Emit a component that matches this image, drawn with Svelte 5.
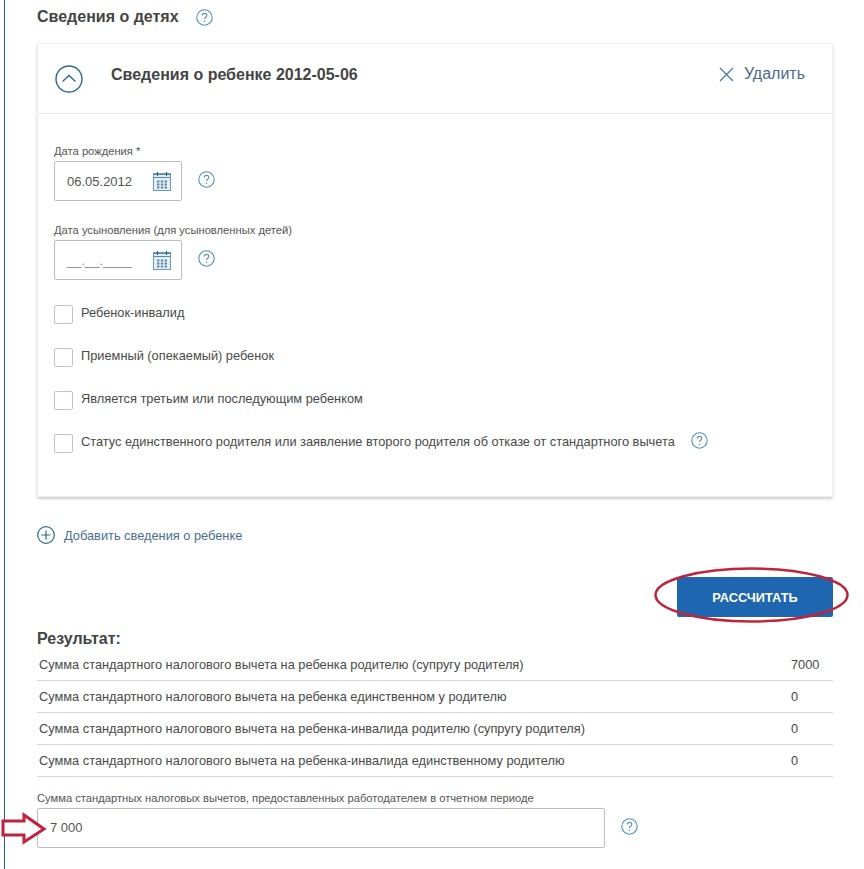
<script>
	const checks = [
		{ label: 'Ребенок-инвалид' },
		{ label: 'Приемный (опекаемый) ребенок' },
		{ label: 'Является третьим или последующим ребенком' },
		{ label: 'Статус единственного родителя или заявление второго родителя об отказе от стандартного вычета', help: true }
	];

	const results = [
		{ label: 'Сумма стандартного налогового вычета на ребенка родителю (супругу родителя)', value: '7000' },
		{ label: 'Сумма стандартного налогового вычета на ребенка единственном у родителю', value: '0' },
		{ label: 'Сумма стандартного налогового вычета на ребенка-инвалида родителю (супругу родителя)', value: '0' },
		{ label: 'Сумма стандартного налогового вычета на ребенка-инвалида единственному родителю', value: '0' }
	];
</script>

{#snippet help()}
	<svg class="help" width="17" height="17" viewBox="0 0 17 17">
		<circle cx="8.5" cy="8.5" r="7.7" fill="none" stroke="#4f93b5" stroke-width="1.1" />
		<path d="M6.2 6.6c0-1.4 1-2.2 2.3-2.2s2.3.8 2.3 2c0 1.8-2.3 1.8-2.3 3.6" fill="none" stroke="#5f8fa8" stroke-width="1.1" />
		<circle cx="8.5" cy="12.3" r=".8" fill="#5f8fa8" />
	</svg>
{/snippet}

{#snippet calendar()}
	<svg class="calendar" width="18" height="19" viewBox="0 0 18 19">
		<rect x=".5" y="1.5" width="17" height="17" fill="#e3eff6" stroke="#6f9ab5" />
		<path d="M1 2.500h16M1 5.500h16" stroke="#5b8aa8" />
		<path d="M4.500 0v4M13.500 0v4" stroke="#2f5f80" />
		<path d="M4 9.500h2.400M7.800 9.500h2.400M11.600 9.500h2.400M4 12.500h2.400M7.800 12.500h2.400M11.600 12.500h2.400M4 15.500h2.400M7.800 15.500h2.400M11.600 15.500h2.400" stroke="#5f88a5" stroke-width="2" />
	</svg>
{/snippet}

<div class="page">
	<div class="section-title">
		<h2>Сведения о детях</h2>
		{@render help()}
	</div>

	<div class="card">
		<div class="card-header">
			<svg class="toggle" width="28" height="28" viewBox="0 0 28 28">
				<circle cx="14" cy="14" r="13" fill="none" stroke="#2b6a94" stroke-width="1.4" />
				<path d="M7.500 16.500 14 10.500l6.500 6" fill="none" stroke="#2b6a94" stroke-width="1.3" />
			</svg>
			<h3>Сведения о ребенке 2012-05-06</h3>
			<button class="remove">
				<svg width="15" height="15" viewBox="0 0 15 15">
					<path d="M1 1l13 13M14 1 1 14" stroke="#3f7aa5" stroke-width="1.2" />
				</svg>
				<span>Удалить</span>
			</button>
		</div>

		<div class="card-body">
			<div class="field">
				<span class="field-label">Дата рождения *</span>
				<div class="field-row">
					<div class="date-input">
						<span>06.05.2012</span>
						{@render calendar()}
					</div>
					{@render help()}
				</div>
			</div>

			<div class="field">
				<span class="field-label">Дата усыновления (для усыновленных детей)</span>
				<div class="field-row">
					<div class="date-input">
						<span class="mask">__.__.____</span>
						{@render calendar()}
					</div>
					{@render help()}
				</div>
			</div>

			<div class="checks">
				{#each checks as item}
					<div class="check">
						<span class="box"></span>
						<span class="check-label">{item.label}</span>
						{#if item.help}
							{@render help()}
						{/if}
					</div>
				{/each}
			</div>
		</div>
	</div>

	<div class="add">
		<svg width="18" height="18" viewBox="0 0 18 18">
			<circle cx="9" cy="9" r="8.300" fill="none" stroke="#2b6a94" stroke-width="1.200" />
			<path d="M9 4.500v9M4.500 9h9" stroke="#2b6a94" stroke-width="1.200" />
		</svg>
		<span>Добавить сведения о ребенке</span>
	</div>

	<div class="actions">
		<button class="submit">РАССЧИТАТЬ</button>
	</div>

	<h2 class="result-title">Результат:</h2>
	<div class="results">
		{#each results as row}
			<div class="result-row">
				<span>{row.label}</span>
				<span class="result-value">{row.value}</span>
			</div>
		{/each}
	</div>

	<div class="total">
		<span class="field-label">Сумма стандартных налоговых вычетов, предоставленных работодателем в отчетном периоде</span>
		<div class="field-row">
			<div class="total-input">7 000</div>
			{@render help()}
		</div>
	</div>
</div>

<!-- red marks drawn over the screenshot -->
<svg class="marks" width="864" height="869" viewBox="0 0 864 869">
	<ellipse cx="751.500" cy="595" rx="96" ry="26.500" fill="none" stroke="#c0233c" stroke-width="2.500" />
	<path d="M3 821h21v-6l20 14-20 13v-7H3z" fill="#fff" stroke="#c0233c" stroke-width="3" />
</svg>

<style>
	:global(body) {
		margin: 0;
		background: #fff;
		font-family: Arial, "Liberation Sans", sans-serif;
		color: #4a4a4a;
	}

	.page {
		box-sizing: border-box;
		width: 864px;
		height: 869px;
		margin-left: 4px;
		padding: 7px 27px 0 32px;
		border-left: 1px solid #2f5f80;
		overflow: hidden;
	}

	.section-title {
		display: flex;
		align-items: center;
		gap: 17px;
		height: 20px;
		margin-bottom: 16px;
	}

	h2 {
		margin: 0;
		font-size: 16px;
		font-weight: 700;
		color: #444;
	}

	.card {
		box-sizing: border-box;
		width: 796px;
		height: 454px;
		border: 1px solid #f0f0f0;
		border-radius: 2px;
		box-shadow: 0 2px 3px rgba(0, 0, 0, 0.2);
	}

	.card-header {
		box-sizing: border-box;
		display: flex;
		align-items: center;
		height: 70px;
		padding: 0 27px 0 17px;
		border-bottom: 1px solid #e8e8e8;
	}

	.toggle {
		margin-right: 28px;
	}

	h3 {
		flex: 1;
		margin: 0 0 7px;
		font-size: 16px;
		font-weight: 700;
		color: #444;
	}

	.remove {
		display: flex;
		align-items: center;
		gap: 10px;
		margin-bottom: 9px;
		padding: 0;
		border: none;
		background: none;
		font: inherit;
		font-size: 16px;
		color: #4b6a88;
	}

	.card-body {
		padding: 30px 16px 0;
	}

	.field {
		margin-bottom: 22px;
	}

	.field-label {
		display: block;
		height: 17px;
		font-size: 11.200px;
		line-height: 14px;
		color: #555;
	}

	.field-row {
		display: flex;
		align-items: center;
		gap: 16px;
	}

	.field-row .help {
		margin-top: -4px;
	}

	.date-input {
		box-sizing: border-box;
		display: flex;
		align-items: center;
		justify-content: space-between;
		width: 128px;
		height: 40px;
		padding: 0 10px 0 12px;
		border: 1px solid #bdbdbd;
		border-radius: 2px;
		font-size: 13px;
		color: #555;
	}

	.mask {
		color: #888;
	}

	.checks {
		display: flex;
		flex-direction: column;
		gap: 23px;
		padding-top: 2px;
	}

	.check {
		display: flex;
		align-items: center;
		height: 20px;
		font-size: 12.800px;
	}

	.box {
		box-sizing: border-box;
		width: 19px;
		height: 19px;
		margin-right: 8px;
		border: 1px solid #c4c4c4;
		border-radius: 2px;
	}

	.check-label {
		margin-top: -4px;
		margin-right: 16px;
	}

	.check .help {
		margin-top: -5px;
	}

	.add {
		display: flex;
		align-items: center;
		gap: 9px;
		height: 18px;
		margin-top: 29px;
		font-size: 12.800px;
		color: #4b6f92;
	}

	.actions {
		display: flex;
		justify-content: flex-end;
		width: 796px;
		margin-top: 33px;
	}

	.submit {
		width: 156px;
		height: 40px;
		border: none;
		border-radius: 2px;
		background: #1e66b0;
		color: #fff;
		font: inherit;
		font-size: 12.800px;
		font-weight: 700;
	}

	.result-title {
		margin-top: 12px;
		height: 20px;
		line-height: 19px;
		font-size: 16px;
	}

	.results {
		width: 796px;
	}

	.result-row {
		box-sizing: border-box;
		display: flex;
		justify-content: space-between;
		align-items: center;
		height: 32px;
		padding: 0 13px 1px 2px;
		border-bottom: 1px solid #d8d8d8;
		font-size: 12.800px;
	}

	.result-value {
		width: 29px;
	}

	.total {
		margin-top: 14px;
	}

	.total-input {
		box-sizing: border-box;
		width: 568px;
		height: 40px;
		padding: 0 12px;
		border: 1px solid #bdbdbd;
		border-radius: 2px;
		font-size: 13px;
		line-height: 38px;
		color: #555;
	}

	.marks {
		position: absolute;
		top: 0;
		left: 0;
		pointer-events: none;
	}
</style>
